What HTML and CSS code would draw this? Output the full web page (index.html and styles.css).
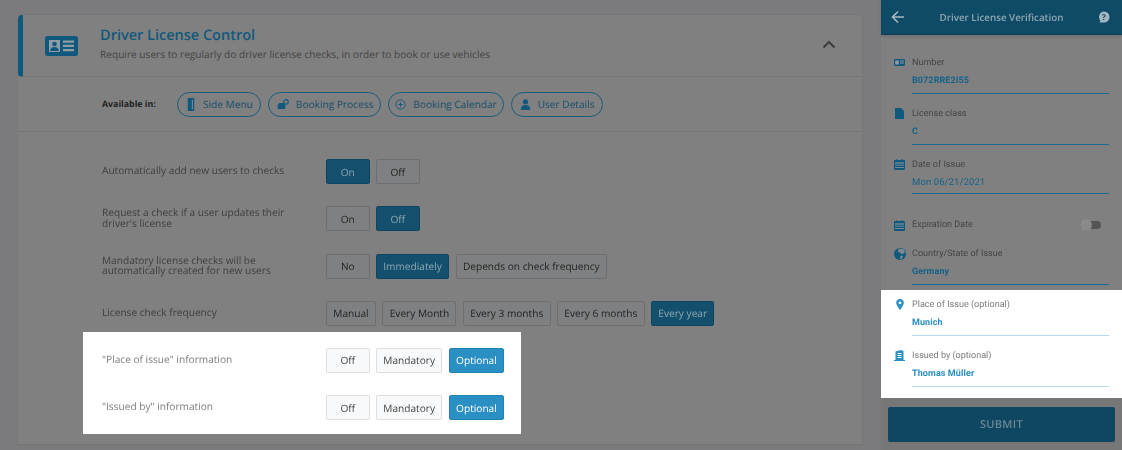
FILE: index.html
```html
<!DOCTYPE html>
<html lang="en">
<head>
<meta charset="utf-8">
<title>Driver License Control</title>
<link rel="stylesheet" href="styles.css">
</head>
<body>
<main class="main">
  <section class="card">
    <header class="card-head">
      <svg class="head-icon" viewBox="0 0 33 20" width="33" height="20"><rect width="33" height="20" rx="2.500" fill="#10597c"/><rect x="4" y="4" width="11" height="12" fill="#8e9ca4"/><circle cx="9.500" cy="8" r="2.300" fill="#10597c"/><path d="M5.200 15c0-2.800 1.800-4 4.300-4s4.300 1.200 4.300 4z" fill="#10597c"/><path d="M18 4.500h11v2.200H18zM18 8.800h11V11H18zM18 13h11v2.200H18z" fill="#8e9ca4"/></svg>
      <div class="head-text">
        <h1 class="title">Driver License Control</h1>
        <p class="subtitle">Require users to regularly do driver license checks, in order to book or use vehicles</p>
      </div>
      <svg class="chevron" viewBox="0 0 14 9" width="14" height="9"><path d="M1.500 7.500 7 2l5.500 5.500" fill="none" stroke="#3c3c3c" stroke-width="2"/></svg>
    </header>
    <div class="avail">
      <span class="avail-label">Available in:</span>
      <span class="pill"><svg viewBox="0 0 12 16" width="10" height="13"><path d="M2 0h8v16H2z" fill="#10597c"/><path d="M7 2h1.500v12H7z" fill="#6d8490"/></svg>Side Menu</span>
      <span class="pill"><svg viewBox="0 0 16 14" width="12" height="11"><path d="M1 13V8l2-3h6l2 3v5z" fill="#10597c"/><circle cx="12" cy="3.500" r="3" fill="none" stroke="#10597c" stroke-width="1.500"/></svg>Booking Process</span>
      <span class="pill pill-tight"><svg viewBox="0 0 14 14" width="11" height="11"><circle cx="7" cy="7" r="6" fill="none" stroke="#10597c" stroke-width="1.200"/><path d="M7 4v6M4 7h6" stroke="#10597c" stroke-width="1.200"/></svg>Booking Calendar</span>
      <span class="pill"><svg viewBox="0 0 14 14" width="11" height="11"><circle cx="7" cy="3.500" r="3.300" fill="#10597c"/><path d="M1 14c0-5 2.500-6.500 6-6.500s6 1.500 6 6.500z" fill="#10597c"/></svg>User Details</span>
    </div>
    <div class="settings">
      <div class="row">
        <div class="label one">Automatically add new users to checks</div>
        <div class="btns"><span class="btn w44 on">On</span><span class="btn w44">Off</span></div>
      </div>
      <div class="row">
        <div class="label">Request a check if a user updates their driver's license</div>
        <div class="btns"><span class="btn w44">On</span><span class="btn w44 on">Off</span></div>
      </div>
      <div class="row">
        <div class="label">Mandatory license checks will be automatically created for new users</div>
        <div class="btns"><span class="btn w44">No</span><span class="btn on">Immediately</span><span class="btn">Depends on check frequency</span></div>
      </div>
      <div class="row">
        <div class="label one">License check frequency</div>
        <div class="btns"><span class="btn">Manual</span><span class="btn">Every Month</span><span class="btn">Every 3 months</span><span class="btn">Every 6 months</span><span class="btn on">Every year</span></div>
      </div>
      <div class="lit">
        <div class="row">
          <div class="label one">"Place of issue" information</div>
          <div class="btns"><span class="btn w44">Off</span><span class="btn">Mandatory</span><span class="btn on">Optional</span></div>
        </div>
        <div class="row">
          <div class="label one">"Issued by" information</div>
          <div class="btns"><span class="btn w44">Off</span><span class="btn">Mandatory</span><span class="btn on">Optional</span></div>
        </div>
      </div>
    </div>
  </section>
</main>
<aside class="panel">
  <header class="panel-head">
    <svg viewBox="0 0 14 14" width="14" height="14"><path d="M13 7H2M7 1.500 1.500 7 7 12.500" fill="none" stroke="#a3b6c0" stroke-width="1.700"/></svg>
    <span class="panel-title">Driver License Verification</span>
    <svg viewBox="0 0 12 12" width="12" height="12"><path d="M6 .5a5.500 5.500 0 0 1 0 11H1.500l1-1.800A5.500 5.500 0 0 1 6 .5z" fill="#a3b6c0"/><text x="6" y="9" text-anchor="middle" class="q">?</text></svg>
  </header>
  <div class="fields">
    <div class="field f-number">
      <svg class="ficon" viewBox="0 0 11 7" width="11" height="7"><rect width="11" height="7" rx="1" fill="#10597c"/><path d="M1.200 1.500h3.600v4H1.200zM6 1.500h3.800v1H6zM6 3.500h3.800v1H6z" fill="#8e9ca4"/></svg>
      <div class="fbody"><div class="flabel">Number</div><div class="fvalue">B072RRE2I55</div></div>
    </div>
    <div class="field">
      <svg class="ficon doc" viewBox="0 0 9 11" width="9" height="11"><path d="M0 0h6l3 3v8H0z" fill="#10597c"/></svg>
      <div class="fbody"><div class="flabel">License class</div><div class="fvalue">C</div></div>
    </div>
    <div class="field">
      <svg class="ficon" viewBox="0 0 11 11" width="11" height="11"><rect y="1" width="11" height="10" rx="1" fill="#10597c"/><path d="M2.500 0h1v2h-1zM7.500 0h1v2h-1z" fill="#10597c"/><path d="M1 3.500h9v1H1zM1 5.800h9v.8H1zM1 8h9v.8H1z" fill="#8e9ca4"/></svg>
      <div class="fbody short"><div class="flabel">Date of Issue</div><div class="fvalue plain">Mon 06/21/2021</div></div>
    </div>
    <div class="field f-toggle">
      <svg class="ficon" viewBox="0 0 11 11" width="11" height="11"><rect y="1" width="11" height="10" rx="1" fill="#10597c"/><path d="M2.500 0h1v2h-1zM7.500 0h1v2h-1z" fill="#10597c"/><path d="M1 3.500h9v1H1zM1 5.800h9v.8H1zM1 8h9v.8H1z" fill="#8e9ca4"/></svg>
      <div class="flabel toggle-label">Expiration Date</div>
      <span class="toggle"><span class="knob"></span></span>
    </div>
    <div class="field">
      <svg class="ficon" viewBox="0 0 12 12" width="12" height="12"><circle cx="6" cy="6" r="6" fill="#10597c"/><path d="M4.500 .5 10 1.500l.8 3.500-3 1.200L6 4.500 4 4zM6.500 7.500l2.500.5-1.500 3.500-1.500-1z" fill="#7f8a90"/></svg>
      <div class="fbody"><div class="flabel">Country/State of Issue</div><div class="fvalue">Germany</div></div>
    </div>
    <div class="panel-lit">
      <div class="field">
        <svg class="ficon pin" viewBox="0 0 8 11" width="8" height="11"><path d="M4 0a3.800 3.800 0 0 1 3.800 3.800C7.800 6.500 4 11 4 11S.2 6.500.2 3.800A3.800 3.800 0 0 1 4 0z" fill="#2a8fc2"/><circle cx="4" cy="3.800" r="1.400" fill="#fff"/></svg>
        <div class="fbody"><div class="flabel">Place of Issue (optional)</div><div class="fvalue">Munich</div></div>
      </div>
      <div class="field">
        <svg class="ficon" viewBox="0 0 11 11" width="11" height="11"><path d="M1.500 1.500 7 0l2.500 1v9H11v1H0v-1h1.500z" fill="#2a8fc2"/><path d="M3.500 3h4v.9h-4zM3.500 5h4v.9h-4zM3.500 7h4v.9h-4z" fill="#fff"/></svg>
        <div class="fbody"><div class="flabel">Issued by (optional)</div><div class="fvalue">Thomas Müller</div></div>
      </div>
    </div>
  </div>
  <div class="panel-foot"><span class="submit">SUBMIT</span></div>
</aside>
</body>
</html>
```

FILE: styles.css
```css
* { box-sizing: border-box; }
html, body { margin: 0; height: 450px; overflow: hidden; }
body {
  display: flex;
  background: #7b7b7d;
  font-family: "Open Sans", "Liberation Sans", sans-serif;
  text-rendering: geometricPrecision;
  filter: blur(.3px);
}
.main { width: 881px; padding: 14px 18px 0; }
.card {
  height: 431px;
  background: #808080;
  border: 1px solid #767676;
  border-left: 0;
  border-radius: 4px 4px 0 0;
}
.card-head {
  display: flex;
  align-items: center;
  height: 62px;
  padding: 0 26px 0 22px;
  border-left: 5px solid #10597c;
  border-bottom: 1px solid #767676;
  border-radius: 4px 0 0 4px;
}
.head-icon { flex: none; }
.head-text { flex: 1; margin: -4px 0 0 22px; }
.title {
  margin: 0;
  font-size: 14.500px;
  line-height: 20px;
  font-weight: 600;
  color: #10597c;
}
.subtitle {
  margin: 1px 0 0;
  font-size: 10.150px;
  line-height: 14px;
  color: #444;
}
.chevron { flex: none; margin-top: -3px; }
.avail {
  display: flex;
  align-items: center;
  gap: 7px;
  height: 55px;
  padding: 0 0 0 84px;
  border-bottom: 1px solid #767676;
}
.avail-label {
  width: 68px;
  font-size: 8.800px;
  font-weight: 700;
  color: #222;
}
.pill {
  display: inline-flex;
  align-items: center;
  gap: 7px;
  height: 25px;
  padding: 0 7px 0 8px;
  border: 1px solid #1a5c7c;
  border-radius: 13px;
  font-size: 10.150px;
  color: #174f6b;
  white-space: nowrap;
}
.pill-tight { padding: 0 6px; }
.settings { padding: 27px 0 0 84px; }
.row {
  display: flex;
  height: 25px;
  margin-bottom: 22.300px;
}
.label {
  width: 224px;
  padding: 1px 30px 0 0;
  flex: none;
  font-size: 10.150px;
  line-height: 10.300px;
  color: #3e3e3e;
}
.label.one { line-height: 22.500px; padding-top: 0; }
.btns { display: flex; gap: 6.500px; }
.btn {
  display: flex;
  align-items: center;
  justify-content: center;
  height: 25px;
  padding: 0 6.300px;
  background: #7f8081;
  border: 1px solid #6f6f6f;
  border-radius: 2px;
  font-size: 10.150px;
  color: #222;
  white-space: nowrap;
}
.w44 { width: 43.500px; }
.btn.on {
  background: #14506e;
  border-color: #0f4560;
  color: #8ea6b2;
}
.lit {
  width: 438px;
  height: 102px;
  margin: -16.300px 0 0 -19px;
  padding: 16px 0 0 19px;
  background: #fff;
}
.lit .row:last-child { margin-bottom: 0; }
.lit .label { color: #7c7c7c; }
.lit .btn { background: #f8f9fa; border-color: #dedede; color: #444; }
.lit .btn.on { background: #2a8fc2; border-color: #2283b3; color: #fff; }

.panel {
  display: flex;
  flex-direction: column;
  width: 241px;
  background: #808080;
  font-family: Roboto, "Liberation Sans", sans-serif;
}
.panel-head {
  display: flex;
  align-items: center;
  justify-content: space-between;
  height: 35px;
  padding: 0 12px 0 10px;
  background: #0f4a66;
  border-bottom: 1px solid #0c4059;
  box-shadow: 0 2px 3px rgba(0,0,0,.12);
}
.panel-title {
  padding-top: 1px;
  font-family: "Open Sans", "Liberation Sans", sans-serif;
  font-size: 9.800px;
  font-weight: 600;
  color: #8fa6b3;
}
.q { font: 700 8px "Open Sans", sans-serif; fill: #0f4a66; }
.fields { padding-top: 20px; }
.field {
  display: flex;
  align-items: flex-start;
  height: 51px;
  padding: 0 13px 0 13px;
}
.ficon { flex: none; margin-top: 2px; }
.f-number .ficon { margin-top: 4px; }
.doc { margin-left: 1px; }
.pin { margin-left: 2px; }
.fbody {
  flex: 0 0 197px;
  height: 39px;
  margin-left: auto;
  padding-top: 1px;
  border-bottom: 1px solid #1b6a8e;
}
.fbody.short { height: 37px; }
.flabel { font-size: 9.050px; line-height: 14px; color: #444; }
.fvalue {
  margin-top: 4px;
  font-size: 9px;
  line-height: 14px;
  font-weight: 700;
  letter-spacing: .1px;
  color: #156289;
}
.fvalue.plain { font-size: 9.500px; font-weight: 400; letter-spacing: .1px; }
.f-toggle { align-items: center; height: 28px; margin: 3px 0 7px; }
.f-toggle .ficon { margin: 0; }
.toggle-label { margin-left: 7px; flex: 1; }
.toggle {
  position: relative;
  width: 21px;
  height: 8px;
  margin-right: 8px;
  background: #555;
  border-radius: 4px;
}
.knob {
  position: absolute;
  left: 0;
  top: -2px;
  width: 12px;
  height: 12px;
  border-radius: 50%;
  background: #8a8a8a;
}
.panel-lit {
  height: 108px;
  margin-top: -7px;
  padding-top: 7px;
  background: #fff;
}
.panel-lit .flabel { color: #7c7c7c; }
.panel-lit .fvalue { color: #2a8fc2; }
.panel-lit .fbody { border-bottom-color: #b5d9ea; }
.panel-foot {
  flex: 1;
  padding: 9px 7px 0;
  background: #777;
}
.submit {
  display: flex;
  align-items: center;
  justify-content: center;
  height: 35px;
  background: #0f4763;
  border-radius: 2px;
  font-family: "Open Sans", "Liberation Sans", sans-serif;
  font-size: 11px;
  font-weight: 600;
  letter-spacing: .3px;
  color: #6d8694;
}
```
